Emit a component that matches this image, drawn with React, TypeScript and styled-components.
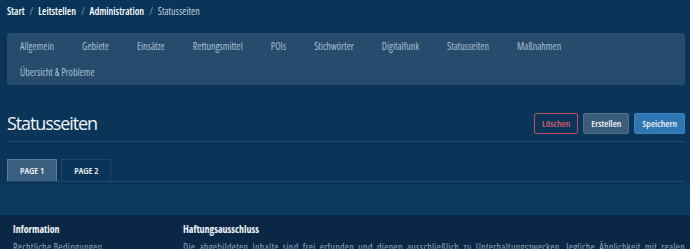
import React from "react";
import styled, { createGlobalStyle } from "styled-components";

const Global = createGlobalStyle`
  html, body { margin: 0; padding: 0; background: #0a3558; }
  body { font-family: "Open Sans", "Noto Sans", sans-serif; font-stretch: 75%; width: 690px; height: 249px; overflow: hidden; }
  * { box-sizing: border-box; }
`;

const Page = styled.div`
  width: 690px;
  background: #0a3558;
`;

const Main = styled.div`
  padding: 0 5px 0 7px;
`;

const Breadcrumb = styled.nav`
  display: flex;
  align-items: center;
  height: 21px;
  font-size: 10px;
  font-weight: 600;
  color: #ffffff;
`;

const Crumb = styled.span<{ $current?: boolean }>`
  color: ${(p) => (p.$current ? "#c3d0dc" : "#ffffff")};
  font-weight: ${(p) => (p.$current ? 400 : 600)};
`;

const Sep = styled.span`
  color: #8aa0b6;
  font-weight: 400;
  margin: 0 5px;
`;

const NavPanel = styled.div`
  margin-top: 12px;
  background: #264b6c;
  border-radius: 3px;
  display: flex;
  flex-wrap: wrap;
  width: 678px;
  padding-right: 20px;
`;

const NavItem = styled.a`
  display: block;
  height: 26px;
  line-height: 26px;
  padding: 0 14px 0 13px;
  margin-right: 1px;
  font-size: 10px;
  color: #a9bfd3;
  white-space: nowrap;
`;

const Header = styled.div`
  display: flex;
  align-items: center;
  justify-content: space-between;
  margin-top: 26px;
  padding-bottom: 6px;
  border-bottom: 1px solid #1f4b70;
  width: 678px;
`;

const Title = styled.h1`
  margin: 0;
  font-size: 18px;
  font-stretch: 100%;
  letter-spacing: -1.1px;
  font-weight: 400;
  color: #f2f5f8;
  line-height: 24px;
`;

const Buttons = styled.div`
  display: flex;
  gap: 5px;
`;

const Button = styled.button<{ $variant: "danger" | "secondary" | "primary" }>`
  height: 21px;
  padding: 0 7px;
  font-family: inherit;
  font-stretch: inherit;
  font-size: 9.5px;
  font-weight: 600;
  border-radius: 2px;
  border: 1px solid
    ${(p) => (p.$variant === "danger" ? "#c0505f" : p.$variant === "secondary" ? "#4e6e8c" : "#3a84c0")};
  background: ${(p) => (p.$variant === "danger" ? "transparent" : p.$variant === "secondary" ? "#3c5c7c" : "#2f77b4")};
  color: ${(p) => (p.$variant === "danger" ? "#dc5d6e" : "#eef3f7")};
`;

const Tabs = styled.div`
  display: flex;
  gap: 4px;
  margin-top: 17px;
  border-bottom: 1px solid #1e4a6f;
  width: 678px;
`;

const Tab = styled.div<{ $active?: boolean }>`
  height: 22px;
  line-height: 21px;
  padding: 0 12px;
  font-size: 9.5px;
  font-weight: 600;
  color: #f4f7fa;
  border: 1px solid ${(p) => (p.$active ? "#5a7c9a" : "#1b4468")};
  border-bottom: none;
  background: ${(p) => (p.$active ? "#3b5f7f" : "transparent")};
`;

const TabBody = styled.div`
  height: 31px;
  margin-top: 2px;
  background: #0b3960;
  margin-left: -7px;
  margin-right: -5px;
  border-top: 1px solid #0d3d64;
`;

const Footer = styled.footer`
  background: #0a2845;
  display: grid;
  grid-template-columns: 170px 1fr;
  padding: 7px 5px 0 13px;
  height: 40px;
`;

const Col = styled.div``;

const ColTitle = styled.div`
  font-size: 10px;
  font-weight: 700;
  color: #f4f7fa;
  line-height: 14px;
`;

const ColText = styled.p`
  margin: 4px 0 0;
  font-size: 10px;
  line-height: 14px;
  color: #8ea2b6;
  text-align: justify;
  letter-spacing: 0.3px;
`;

export default function App() {
  const nav = [
    "Allgemein",
    "Gebiete",
    "Einsätze",
    "Rettungsmittel",
    "POIs",
    "Stichwörter",
    "Digitalfunk",
    "Statusseiten",
    "Maßnahmen",
    "Übersicht & Probleme",
  ];
  return (
    <Page>
      <Global />
      <Main>
        <Breadcrumb>
          <Crumb>Start</Crumb>
          <Sep>/</Sep>
          <Crumb>Leitstellen</Crumb>
          <Sep>/</Sep>
          <Crumb>Administration</Crumb>
          <Sep>/</Sep>
          <Crumb $current>Statusseiten</Crumb>
        </Breadcrumb>
        <NavPanel>
          {nav.map((n) => (
            <NavItem key={n}>{n}</NavItem>
          ))}
        </NavPanel>
        <Header>
          <Title>Statusseiten</Title>
          <Buttons>
            <Button $variant="danger">Löschen</Button>
            <Button $variant="secondary">Erstellen</Button>
            <Button $variant="primary">Speichern</Button>
          </Buttons>
        </Header>
        <Tabs>
          <Tab $active>PAGE 1</Tab>
          <Tab>PAGE 2</Tab>
        </Tabs>
        <TabBody />
      </Main>
      <Footer>
        <Col>
          <ColTitle>Information</ColTitle>
          <ColText>Rechtliche Bedingungen</ColText>
        </Col>
        <Col>
          <ColTitle>Haftungsausschluss</ColTitle>
          <ColText>
            Die abgebildeten Inhalte sind frei erfunden und dienen ausschließlich zu Unterhaltungszwecken. Jegliche
            Ähnlichkeit mit realen Personen, Orten oder Ereignissen ist rein zufällig.
          </ColText>
        </Col>
      </Footer>
    </Page>
  );
}
